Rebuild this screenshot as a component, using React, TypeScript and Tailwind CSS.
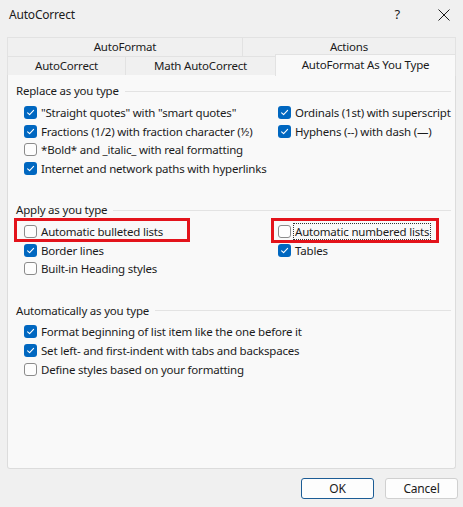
import React from "react";

const F = { fontFamily: '"Noto Sans", "Open Sans", sans-serif', letterSpacing: "-0.2px" };

function Box({ checked }: { checked: boolean }) {
  if (checked) {
    return (
      <span className="flex h-[13px] w-[13px] shrink-0 items-center justify-center rounded-[3px] bg-[#0067c0]">
        <svg width="9" height="9" viewBox="0 0 9 9">
          <path d="M1.6 4.8 L3.6 6.7 L7.6 2.4" fill="none" stroke="#fff" strokeWidth="1.1" strokeLinecap="round" strokeLinejoin="round" />
        </svg>
      </span>
    );
  }
  return <span className="block h-[13px] w-[13px] shrink-0 rounded-[3px] border border-[#8b8b8b] bg-[#fdfdfd]" />;
}

function Item({ checked, label, focus }: { checked: boolean; label: string; focus?: boolean }) {
  return (
    <div className="flex h-[18.75px] items-center">
      <Box checked={checked} />
      <span className={"ml-[3px] whitespace-nowrap px-[1px] leading-[15px] " + (focus ? "outline outline-1 outline-dotted outline-[#333]" : "")}>{label}</span>
    </div>
  );
}

function RedItem({ checked, label, focus, wide }: { checked: boolean; label: string; focus?: boolean; wide: boolean }) {
  return (
    <div className="relative">
      <Item checked={checked} label={label} focus={focus} />
      {wide ? (
        <div className="pointer-events-none absolute -left-[10px] -top-[4px] h-[24px] w-[176px] border-[3px] border-[#e3131b]" />
      ) : (
        <div className="pointer-events-none absolute -left-[7px] -top-[4px] h-[25px] w-[168px] border-[3px] border-[#e3131b]" />
      )}
    </div>
  );
}

function Header({ title }: { title: string }) {
  return (
    <div className="flex h-[16px] items-center">
      <span className="whitespace-nowrap pr-[6px]">{title}</span>
      <div className="h-px flex-1 bg-[#e3e3e3]" />
    </div>
  );
}

export default function App() {
  return (
    <div className="h-[507px] w-[463px] overflow-hidden bg-[#f0f0f0] text-[11.5px] text-[#1b1b1b]" style={F}>
      {/* Title bar */}
      <div className="flex h-[30px] items-center pl-[9px] pr-[10px]">
        <span className="flex-1 text-[12px]">AutoCorrect</span>
        <span className="mr-[38px] text-[13px]">?</span>
        <svg width="12" height="12" viewBox="0 0 12 12" className="mr-[3px]">
          <path d="M0.5 0.5 L11.5 11.5 M11.5 0.5 L0.5 11.5" stroke="#1b1b1b" strokeWidth="1" />
        </svg>
      </div>

      {/* Tabs */}
      <div className="mx-[7px] mt-[7px]">
        <div className="flex h-[19px] border-t border-[#e2e2e2]">
          <div className="flex w-[236px] items-center justify-center border-l border-r border-[#e2e2e2]">AutoFormat</div>
          <div className="flex flex-1 items-center justify-center border-r border-[#e2e2e2]">Actions</div>
        </div>
        <div className="flex h-[19px]">
          <div className="flex w-[118px] items-center justify-center border-l border-t border-[#e2e2e2]">AutoCorrect</div>
          <div className="flex w-[150px] items-center justify-center border-l border-t border-[#e2e2e2]">Math AutoCorrect</div>
          <div className="-mt-[2px] flex h-[22px] flex-1 items-center justify-center border-l border-r border-t border-[#e2e2e2] bg-[#f9f9f9] pb-[2px]">AutoFormat As You Type</div>
        </div>
      </div>

      {/* Panel */}
      <div className="mx-[7px] h-[394px] rounded-b-[3px] border border-t-0 border-[#dcdcdc] bg-[#f9f9f9] pl-[8px] pr-[4px] pt-[8px]">
        <Header title="Replace as you type" />
        <div className="mt-[4px] grid grid-cols-[254px_174px] pl-[8px]">
          <div>
            <Item checked label={'"Straight quotes" with "smart quotes"'} />
            <Item checked label="Fractions (1/2) with fraction character (½)" />
            <Item checked={false} label="*Bold* and _italic_ with real formatting" />
            <Item checked label="Internet and network paths with hyperlinks" />
          </div>
          <div>
            <Item checked label="Ordinals (1st) with superscript" />
            <Item checked label="Hyphens (--) with dash (—)" />
          </div>
        </div>

        <div className="mt-[24px]">
          <Header title="Apply as you type" />
        </div>
        <div className="mt-[4px] grid grid-cols-[254px_174px] pl-[8px]">
          <div>
            <RedItem checked={false} label="Automatic bulleted lists" wide />
            <Item checked label="Border lines" />
            <Item checked={false} label="Built-in Heading styles" />
          </div>
          <div>
            <RedItem checked={false} label="Automatic numbered lists" focus wide={false} />
            <Item checked label="Tables" />
          </div>
        </div>

        <div className="mt-[24px]">
          <Header title="Automatically as you type" />
        </div>
        <div className="mt-[4px] pl-[8px]">
          <Item checked label="Format beginning of list item like the one before it" />
          <Item checked label="Set left- and first-indent with tabs and backspaces" />
          <Item checked={false} label="Define styles based on your formatting" />
        </div>
      </div>

      {/* Buttons */}
      <div className="mt-[9px] flex justify-end gap-[11px] pr-[5px]">
        <button className="h-[21px] w-[73px] rounded-[3px] border border-[#1c5c95] bg-[#fdfdfd] text-[12px]">OK</button>
        <button className="h-[21px] w-[73px] rounded-[3px] border border-[#d0d0d0] bg-[#fdfdfd] text-[12px]">Cancel</button>
      </div>
    </div>
  );
}
